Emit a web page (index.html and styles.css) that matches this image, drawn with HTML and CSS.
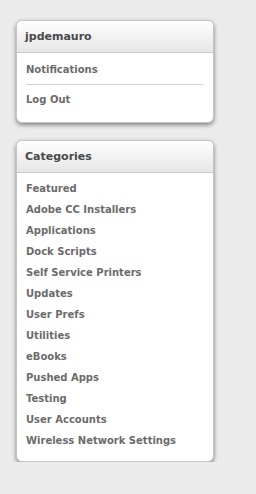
FILE: index.html
```html
<!DOCTYPE html>
<html lang="en">
<head>
    <meta charset="UTF-8">
    <title>Self Service</title>
    <link rel="stylesheet" href="styles.css">
</head>
<body>
    <div class="sidebar">
        <!-- Account -->
        <div class="panel">
            <div class="panel-header">jpdemauro</div>
            <ul class="panel-list account">
                <li><a href="#">Notifications</a></li>
                <li class="sep"><a href="#">Log Out</a></li>
            </ul>
        </div>

        <!-- Categories -->
        <div class="panel">
            <div class="panel-header">Categories</div>
            <ul class="panel-list categories">
                <li><a href="#">Featured</a></li>
                <li><a href="#">Adobe CC Installers</a></li>
                <li><a href="#">Applications</a></li>
                <li><a href="#">Dock Scripts</a></li>
                <li><a href="#">Self Service Printers</a></li>
                <li><a href="#">Updates</a></li>
                <li><a href="#">User Prefs</a></li>
                <li><a href="#">Utilities</a></li>
                <li><a href="#">eBooks</a></li>
                <li><a href="#">Pushed Apps</a></li>
                <li><a href="#">Testing</a></li>
                <li><a href="#">User Accounts</a></li>
                <li><a href="#">Wireless Network Settings</a></li>
            </ul>
        </div>
    </div>
</body>
</html>
```

FILE: styles.css
```css
body {
    margin: 0;
    padding: 0;
    background-color: #ebebeb;
    font-family: "DejaVu Sans", sans-serif;
    color: #666;
}
.sidebar {
    width: 198px;
    padding: 20px 0 0 16px;
    display: flex;
    flex-direction: column;
    gap: 17px;
}
.panel {
    background-color: #ffffff;
    border: 1px solid #c4c4c4;
    border-radius: 6px;
    box-shadow: 0 2px 4px rgba(0, 0, 0, 0.45);
    overflow: hidden;
}
.panel-header {
    height: 31px;
    line-height: 31px;
    padding: 0 8px;
    font-size: 11px;
    font-weight: bold;
    color: #4a4a4a;
    background: linear-gradient(to bottom, #ffffff, #e6e6e6);
    border-bottom: 1px solid #cccccc;
}
.panel-list {
    list-style-type: none;
    margin: 0;
    padding: 0 9px;
}
.panel-list a {
    display: block;
    text-decoration: none;
    color: #6b6b6b;
    font-size: 10px;
    font-weight: bold;
}
.account {
    padding-top: 3px;
    padding-bottom: 7px;
}
.account li {
    line-height: 28px;
}
.account .sep {
    border-top: 1px solid #d6d6d6;
    line-height: 30px;
}
.categories {
    padding-top: 5px;
    padding-bottom: 10px;
}
.categories li {
    line-height: 21px;
}
```
